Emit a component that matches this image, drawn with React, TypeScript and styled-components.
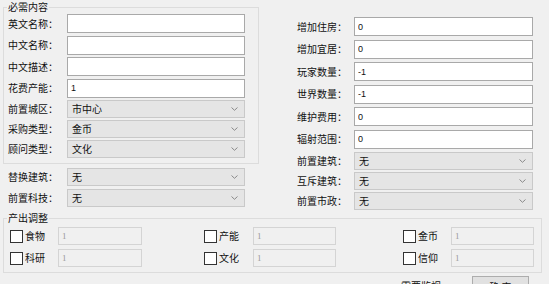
import React from "react";
import styled, { createGlobalStyle } from "styled-components";

const Global = createGlobalStyle`
  html, body { margin: 0; padding: 0; background: #ffffff; }
  body { font-family: "Noto Sans CJK SC", "Noto Sans", sans-serif; }
  * { box-sizing: border-box; }
`;

const Window = styled.div`
  width: 549px;
  height: 284px;
  overflow: hidden;
  background: #f0f0f0;
  font-family: "Noto Sans CJK SC", "Noto Sans", sans-serif;
  font-size: 10px;
  color: #111111;
`;

const Top = styled.div`
  display: flex;
  align-items: flex-start;
  height: 211px;
`;

const LeftCol = styled.div`
  display: flex;
  flex-direction: column;
  margin-left: 3px;
  width: 256px;
`;

const RightCol = styled.div`
  display: flex;
  flex-direction: column;
  margin-left: 38px;
  padding-top: 17px;
`;

const Group = styled.fieldset<{ $pad: string; $w?: number; $ml?: number }>`
  margin: 0 0 0 ${(p) => p.$ml ?? 0}px;
  border: 1px solid #dcdcdc;
  padding: ${(p) => p.$pad};
  min-width: 0;
  ${(p) => (p.$w ? `width: ${p.$w}px;` : "")}
`;

const Legend = styled.legend<{ $ml: number }>`
  padding: 0 1px;
  margin-left: ${(p) => p.$ml}px;
  font-size: 10px;
  line-height: 14px;
  color: #111111;
`;

const Row = styled.div<{ $mb?: number; $mt?: number; $pl?: number }>`
  display: flex;
  align-items: center;
  margin-top: ${(p) => p.$mt ?? 0}px;
  margin-bottom: ${(p) => p.$mb ?? 0}px;
  padding-left: ${(p) => p.$pl ?? 0}px;
`;

const Label = styled.span<{ $w: number }>`
  width: ${(p) => p.$w}px;
  flex: none;
  font-size: 10px;
  line-height: 14px;
  white-space: nowrap;
`;

const TextBox = styled.input<{ $w: number; $h: number }>`
  width: ${(p) => p.$w}px;
  height: ${(p) => p.$h}px;
  margin: 0;
  padding: 0 3px;
  border: 1px solid #a9a9a9;
  background: #ffffff;
  font-family: "Liberation Sans", Arial, sans-serif;
  font-size: 9px;
  color: #111;
  outline: none;
`;

const ComboBox = styled.div<{ $w: number; $h: number }>`
  width: ${(p) => p.$w}px;
  height: ${(p) => p.$h}px;
  display: flex;
  align-items: center;
  justify-content: space-between;
  padding: 0 6px 0 4px;
  border: 1px solid #c9c9c9;
  background: #e5e5e5;
  font-size: 10px;
  line-height: 14px;
  color: #111111;
`;

const Chevron = () => (
  <svg width="7" height="4" viewBox="0 0 7 4">
    <polyline points="0.5,0.5 3.5,3.3 6.5,0.5" fill="none" stroke="#8a8a8a" strokeWidth="1" />
  </svg>
);

const Combo: React.FC<{ text: string; w: number; h: number }> = ({ text, w, h }) => (
  <ComboBox $w={w} $h={h}>
    <span>{text}</span>
    <Chevron />
  </ComboBox>
);

const OutGrid = styled.div`
  display: grid;
  grid-template-columns: 48px 84px 62px 49px 83px 67px 48px 83px;
  grid-auto-rows: 18px;
  row-gap: 4px;
  align-items: center;
  padding: 2px 0 5px 6px;
`;

const Check = styled.label`
  display: flex;
  align-items: center;
  gap: 2px;
  font-size: 10px;
  line-height: 14px;
`;

const Box = styled.span`
  width: 13px;
  height: 13px;
  border: 1px solid #333333;
  background: #ffffff;
  flex: none;
`;

const DisabledBox = styled.input`
  width: 100%;
  height: 18px;
  margin: 0;
  padding: 0 3px;
  border: 1px solid #d4d4d4;
  background: #f0f0f0;
  font-family: "Liberation Serif", serif;
  font-size: 9px;
  color: #9a9a9a;
  outline: none;
`;

const Spacer = styled.span``;

const Footer = styled.div`
  display: flex;
  align-items: flex-start;
  margin-top: 3px;
  padding-left: 401px;
`;

const FooterText = styled.span`
  font-size: 10px;
  line-height: 14px;
  margin-top: 3px;
  width: 71px;
`;

const Button = styled.button`
  width: 57px;
  height: 20px;
  margin: 0;
  padding: 0;
  border: 1px solid #adadad;
  background: #e1e1e1;
  font-family: "Noto Sans CJK SC", sans-serif;
  font-size: 10px;
  color: #111111;
`;

const leftInputs: [string, string][] = [
  ["英文名称：", ""],
  ["中文名称：", ""],
  ["中文描述：", ""],
  ["花费产能：", "1"],
];

const leftCombos: [string, string][] = [
  ["前置城区：", "市中心"],
  ["采购类型：", "金币"],
  ["顾问类型：", "文化"],
];

const rightInputs: [string, string][] = [
  ["增加住房：", "0"],
  ["增加宜居：", "0"],
  ["玩家数量：", "-1"],
  ["世界数量：", "-1"],
  ["维护费用：", "0"],
  ["辐射范围：", "0"],
];

const rightCombos: [string, string][] = [
  ["前置建筑：", "无"],
  ["互斥建筑：", "无"],
  ["前置市政：", "无"],
];

const outputs: [string, string][][] = [
  [["食物", "1"], ["产能", "1"], ["金币", "1"]],
  [["科研", "1"], ["文化", "1"], ["信仰", "1"]],
];

export default function App() {
  return (
    <>
      <Global />
      <Window>
        <Top>
          <LeftCol>
            <Group $pad="0 13px 5px 4px">
              <Legend $ml={-1}>必需内容</Legend>
              {leftInputs.map(([l, v]) => (
                <Row key={l} $mb={2.5}>
                  <Label $w={59}>{l}</Label>
                  <TextBox $w={178} $h={19} readOnly value={v} />
                </Row>
              ))}
              {leftCombos.map(([l, v], i) => (
                <Row key={l} $mb={i < 2 ? 2 : 0}>
                  <Label $w={59}>{l}</Label>
                  <Combo text={v} w={178} h={18} />
                </Row>
              ))}
            </Group>
            <Row $mt={4} $mb={3} $pl={5}>
              <Label $w={59}>替换建筑：</Label>
              <Combo text="无" w={178} h={18} />
            </Row>
            <Row $pl={5}>
              <Label $w={59}>前置科技：</Label>
              <Combo text="无" w={178} h={18} />
            </Row>
          </LeftCol>
          <RightCol>
            {rightInputs.map(([l, v]) => (
              <Row key={l} $mb={3.5}>
                <Label $w={57}>{l}</Label>
                <TextBox $w={179} $h={19} readOnly value={v} />
              </Row>
            ))}
            {rightCombos.map(([l, v], i) => (
              <Row key={l} $mb={i < 2 ? 2.5 : 0}>
                <Label $w={57}>{l}</Label>
                <Combo text={v} w={179} h={17.5} />
              </Row>
            ))}
          </RightCol>
        </Top>
        <Group $pad="0" $w={539} $ml={3}>
          <Legend $ml={3}>产出调整</Legend>
          <OutGrid>
            {outputs.map((row) =>
              row.map(([name, v], ci) => (
                <React.Fragment key={name}>
                  <Check>
                    <Box />
                    {name}
                  </Check>
                  <DisabledBox readOnly disabled value={v} />
                  {ci < 2 && <Spacer />}
                </React.Fragment>
              ))
            )}
          </OutGrid>
        </Group>
        <Footer>
          <FooterText>需要监视</FooterText>
          <Button>确 定</Button>
        </Footer>
      </Window>
    </>
  );
}
